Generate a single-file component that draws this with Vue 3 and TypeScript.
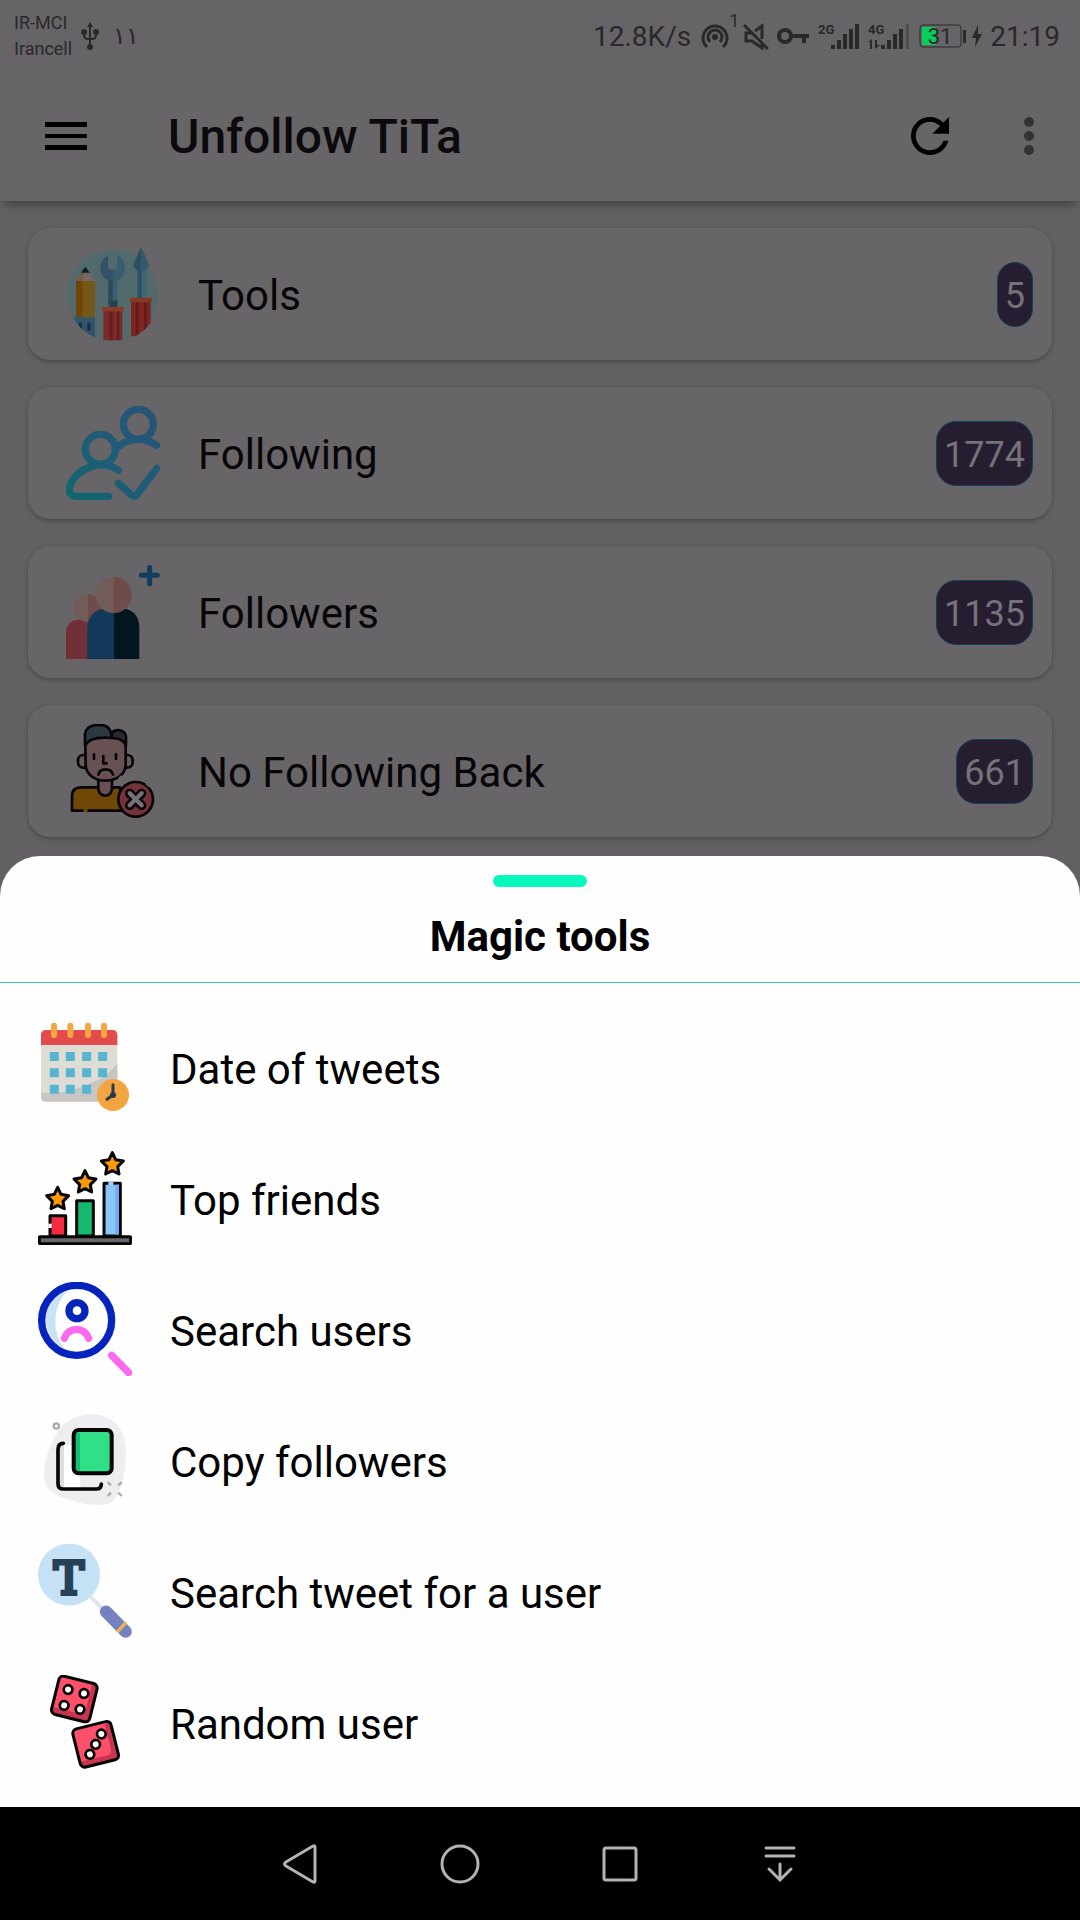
<script setup lang="ts">
interface Entry {
  label: string
  view: string
  art: string
}
interface Category extends Entry {
  count: number
}

const categories: Category[] = [
  {
    label: 'Tools',
    count: 5,
    view: '138 82 282 282',
    art: `
      <defs><clipPath id="disc"><path d="M138 70H420V225A136 137 0 0 1 141 225Z"/></clipPath></defs>
      <circle cx="278" cy="225" r="137" fill="#526a6c"/>
      <g clip-path="url(#disc)">
        <path d="M168 184H225V292H168Z" fill="#755718"/><path d="M168 184H188V292H168Z" fill="#714507"/>
        <path d="M168 184L183 158H208L225 184Z" fill="#776663"/><path d="M168 184L183 158H194L188 184Z" fill="#735b48"/>
        <path d="M183 159L196 141L209 159Z" fill="#101b25"/>
        <path d="M160 293H225V360H160Z" fill="#31546a"/>
        <path d="M181 313V325M207 314V329" stroke="#172f49" stroke-width="10" stroke-linecap="round"/>
        <path d="M265 170H292V262H265Z" fill="#3b6073"/><path d="M265 170H278V262H265Z" fill="#2d4a59"/>
        <path d="M264 108C233 117 233 171 267 183H290C323 171 323 117 292 108V143L285 150H271L264 143Z" fill="#325365"/>
        <path d="M292 108V143L285 150H278V183H290C323 171 323 117 292 108Z" fill="#395e70"/>
        <path d="M272 245L292 240V262H272Z" fill="#263f4d"/>
        <path d="M250 270H307V362H250Z" fill="#7c2a27"/><path d="M269 276H278V362H269ZM291 276H298V362H291Z" fill="#601f23"/>
        <path d="M246 262H312V275H246Z" fill="#8a3c25"/>
        <path d="M352 145H376V235H352Z" fill="#2c5162"/><path d="M365 145H376V235H365Z" fill="#3b6675"/>
        <path d="M363 82L374 105C377 118 386 127 386 140L376 153H351L340 140C342 125 350 117 353 104Z" fill="#2d4e60"/>
        <path d="M363 82L374 105C377 118 386 127 386 140L376 153H363Z" fill="#37596b"/>
        <path d="M333 243H392V350H333Z" fill="#7e251f"/><path d="M347 248H356V350H347ZM372 248H380V350H372Z" fill="#601c20"/>
        <path d="M330 234H396V247H330Z" fill="#853822"/>
      </g>`,
  },
  {
    label: 'Following',
    count: 1774,
    view: '138 558 282 282',
    art: `
      <defs><linearGradient id="sea" gradientUnits="userSpaceOnUse" x1="150" y1="830" x2="400" y2="600">
        <stop offset="0" stop-color="#10676f"/><stop offset=".5" stop-color="#1f5c78"/><stop offset="1" stop-color="#255477"/>
      </linearGradient></defs>
      <g fill="none" stroke="url(#sea)" stroke-width="22" stroke-linecap="round" stroke-linejoin="round">
        <circle cx="355" cy="613" r="45"/><circle cx="241" cy="688" r="45"/>
        <path d="M296 678C330 652 376 651 409 676M295 751C248 716 178 742 154 788C141 811 149 829 170 829H266M295 790L335 825Q344 833 352 822L410 745"/>
      </g>`,
  },
  {
    label: 'Followers',
    count: 1135,
    view: '138 75 282 282',
    art: `
      <path d="M204 162A43 43 0 1 0 204 248Z" fill="#725c59"/><path d="M204 162A43 43 0 0 1 204 248Z" fill="#6f4b4b"/>
      <path d="M138 357V280C138 253 155 236 181 240Q204 254 224 240V357Z" fill="#712f37"/>
      <path d="M202 357V265C203 235 218 213 245 207H282V357Z" fill="#12395a"/>
      <path d="M282 207H318C345 213 358 235 358 265V357H282Z" fill="#03151f"/>
      <circle cx="281" cy="165" r="54" fill="#725c59"/><path d="M281 111A54 54 0 0 1 281 219Z" fill="#6f4b4b"/>
      <path d="M389 82V131M364 106H412" stroke="#123d5d" stroke-width="15" stroke-linecap="round"/>`,
  },
  {
    label: 'No Following Back',
    count: 661,
    view: '138 552 282 282',
    art: `
      <g stroke="#080508" stroke-width="8" stroke-linecap="round" stroke-linejoin="round">
        <path d="M156 812V769Q156 742 184 742H300L310 812Z" fill="#704806"/>
        <path d="M235 721V748C240 773 270 773 276 748V721" fill="#675152"/>
        <rect x="174" y="645" width="40" height="38" rx="16" fill="#65595b"/><rect x="300" y="645" width="38" height="38" rx="16" fill="#65595b"/>
        <path d="M196 610L215 592H300L317 610V675C316 703 290 721 257 722C222 722 198 702 197 675Z" fill="#675152"/>
        <path d="M275 579C290 563 318 571 318 592V617C310 596 288 594 275 594Z" fill="#292930"/>
        <path d="M195 617V582C198 562 215 555 234 555C257 554 273 560 275 594C244 591 208 591 195 617Z" fill="#2b3a41"/>
        <path d="M222 643V657M288 643V657M250 648V670H260M235 704C240 683 273 683 279 704" fill="none"/>
        <circle cx="347" cy="778" r="52" fill="#743239"/>
      </g>
      <path d="M329 760L365 796M365 760L329 796" stroke="#080508" stroke-width="28" stroke-linecap="round"/>
      <path d="M329 760L365 796M365 760L329 796" stroke="#777078" stroke-width="13" stroke-linecap="round"/>
      <path d="M297 716L305 708M378 730L387 739" stroke="#676567" stroke-width="6"/><path d="M190 812H203" stroke="#704806" stroke-width="9"/>`,
  },
]

const magicTools: Entry[] = [
  {
    label: 'Date of tweets',
    view: '54 60 282 282',
    art: `
      <rect x="63" y="92" width="229" height="213" rx="14" fill="#dfdcd5"/>
      <path d="M63 279H110L160 269L205 253L240 238L263 222L292 190V305H77Q63 305 63 291Z" fill="#c9c5c3"/>
      <path d="M63 135V106Q63 90 79 90H277Q292 90 292 106V135Z" fill="#e34b4d"/>
      <path d="M102 77V105M151 77V105M204 77V105M252 77V105" stroke="#f1a744" stroke-width="18" stroke-linecap="round"/>
      <path d="M103 156V282M151 156V282M200 156V282M248 156V233" stroke="#56b6d1" stroke-width="27" stroke-dasharray="27 22"/>
      <circle cx="279" cy="285" r="48" fill="#f2a541"/>
      <path d="M279 254V285L261 298" fill="none" stroke="#243b50" stroke-width="9" stroke-linecap="round"/><circle cx="279" cy="285" r="9" fill="#243b50"/>`,
  },
  {
    label: 'Top friends',
    view: '54 63 282 282',
    art: `
      <defs><path id="star" d="M0 -33L10 -12L33 -8L16 9L20 31L0 21L-20 31L-16 9L-33 -8L-10 -12Z"/></defs>
      <g stroke="#050505" stroke-width="9" stroke-linejoin="round">
        <path d="M90 318V257H137V318Z" fill="#f52b3f"/><path d="M170 318V212H220V318Z" fill="#14b86f"/><path d="M252 318V160H301V318Z" fill="#8ac6fb"/>
        <g fill="#ff9807"><use href="#star" x="113" y="205"/><use href="#star" x="195" y="155"/><use href="#star" x="277" y="101"/></g>
      </g>
      <path d="M286 164H297V314H286Z" fill="#77a9f3"/><path d="M265 160H280" stroke="#a7cdfb" stroke-width="10"/><path d="M90 281V294" stroke="#fff" stroke-width="10"/>
      <rect x="58" y="320" width="274" height="21" rx="3" fill="#666568" stroke="#050505" stroke-width="9"/>`,
  },
  {
    label: 'Search users',
    view: '54 66 282 282',
    art: `
      <path d="M135 90C63 118 54 229 139 274C96 225 91 137 150 85Z" fill="#c9e2f4"/>
      <circle cx="170" cy="181" r="105" fill="none" stroke="#0524bd" stroke-width="22"/>
      <circle cx="171" cy="152" r="24" fill="none" stroke="#0524bd" stroke-width="22"/>
      <path d="M133 235C146 199 193 199 206 235M275 286L326 338" fill="none" stroke="#fb69ef" stroke-width="22" stroke-linecap="round"/>`,
  },
  {
    label: 'Copy followers',
    view: '54 69 282 282',
    art: `
      <path d="M117 120C138 90 178 70 224 73C277 79 306 110 315 159C323 214 310 300 279 333C247 356 188 342 143 328C93 313 65 290 73 239C79 191 93 155 117 120Z" fill="#eeeef1"/>
      <path d="M117 165H156V255H181V294H125L117 282Z" fill="#fff"/><path d="M117 165H132V292H117Z" fill="#dedee1"/>
      <path d="M130 160Q114 160 114 179V281Q114 297 130 297H229Q244 297 244 282" fill="none" stroke="#050505" stroke-width="11" stroke-linecap="round"/>
      <rect x="161" y="120" width="114" height="130" rx="15" fill="#31df86"/><path d="M164 130H180V247Q164 247 164 235Z" fill="#15bd75"/>
      <rect x="161" y="120" width="114" height="130" rx="15" fill="none" stroke="#050505" stroke-width="12"/>
      <circle cx="109" cy="108" r="8" fill="none" stroke="#aaa9ad" stroke-width="7"/>
      <path d="M263 276L273 286M305 276L295 286M263 318L273 308M305 318L295 308" stroke="#aaa9ad" stroke-width="7"/>`,
  },
  {
    label: 'Search tweet for a user',
    view: '54 72 282 282',
    art: `
      <path d="M211 229L250 269" stroke="#e4e5e9" stroke-width="12"/>
      <circle cx="147" cy="164" r="93" fill="#c4e1f5"/>
      <text x="147" y="221" text-anchor="middle" font-family="DejaVu Serif, serif" font-size="134" fill="#264058" stroke="#264058" stroke-width="12">T</text>
      <path d="M258 275L317 335" stroke="#7483bf" stroke-width="37" stroke-linecap="round"/>
      <path d="M291 336L319 308" stroke="#f0b64e" stroke-width="10" transform="rotate(-3 305 322)"/>`,
  },
  {
    label: 'Random user',
    view: '54 465 282 282',
    art: `
      <g transform="rotate(14 163 537)">
        <rect x="104" y="478" width="118" height="118" rx="14" fill="#ff506b"/>
        <path d="M106 576H190Q204 576 204 562V482H222V596H106Z" fill="#c83550"/>
        <rect x="104" y="478" width="118" height="118" rx="14" fill="none" stroke="#050505" stroke-width="9"/>
        <g fill="#fff" stroke="#050505" stroke-width="8"><circle cx="138" cy="514" r="13"/><circle cx="187" cy="514" r="13"/><circle cx="138" cy="563" r="13"/><circle cx="187" cy="563" r="13"/></g>
      </g>
      <g transform="rotate(-14 227 673)">
        <rect x="168" y="614" width="118" height="118" rx="14" fill="#ff506b"/>
        <path d="M170 713H253Q268 713 268 698V620H286V732H170Z" fill="#c83550"/>
        <rect x="168" y="614" width="118" height="118" rx="14" fill="none" stroke="#050505" stroke-width="9"/>
        <g fill="#fff" stroke="#050505" stroke-width="8"><circle cx="251" cy="647" r="13"/><circle cx="227" cy="673" r="13"/><circle cx="203" cy="698" r="13"/></g>
      </g>`,
  },
]
</script>

<template>
  <div class="phone">
    <div class="stage">
      <div class="backdrop">
        <div class="status">
          <div class="carriers"><span>IR-MCI</span><span>Irancell</span></div>
          <svg class="usb" width="18" height="28" viewBox="0 0 18 28" fill="none" stroke="#2a282b" stroke-width="2">
            <path d="M9 5V24M3 11V13Q3 17 7 17H11Q15 17 15 13V11" /><path d="M9 0L12 5H6Z" fill="#2a282b" stroke="none" />
            <g fill="#2a282b" stroke="none"><circle cx="9" cy="25" r="3" /><circle cx="3" cy="10" r="3" /><circle cx="15" cy="10" r="3" /></g>
          </svg>
          <span class="alerts">١١</span>
          <span class="clock speed">12.8K/s</span>
          <svg width="28" height="28" viewBox="0 0 28 28" fill="none" stroke="#2a282b" stroke-width="3">
            <path d="M6 25A12 12 0 1 1 22 25M9 20A7 7 0 1 1 19 20" /><circle cx="14" cy="15" r="3" fill="#2a282b" stroke="none" />
          </svg>
          <span class="sup">1</span>
          <svg class="mute" width="26" height="28" viewBox="0 0 26 28" fill="none" stroke="#2a282b" stroke-width="3">
            <path d="M1 3L25 27M12 9L19 4V17M9 11H3V19H9L19 26V22" />
          </svg>
          <svg class="key" width="32" height="28" viewBox="0 0 32 28" fill="none" stroke="#2a282b" stroke-width="4">
            <circle cx="8" cy="14" r="6" /><path d="M14 14H32M27 14V21" />
          </svg>
          <svg class="signal" width="41" height="28" viewBox="0 0 41 28" fill="#2a282b">
            <text x="0" y="12" class="net">2G</text>
            <path d="M13 23h4v4h-4zM19 18h4v9h-4zM25 12h4v15h-4zM31 7h4v20h-4zM37 2h4v25h-4z" />
          </svg>
          <svg class="signal" width="41" height="28" viewBox="0 0 41 28" fill="#2a282b">
            <text x="0" y="12" class="net">4G</text>
            <path d="M0 20L4 17V27H2V20ZM7 18h2v5h3l-5 4z" />
            <path d="M13 23h4v4h-4zM19 18h4v9h-4zM25 12h4v15h-4zM31 7h4v20h-4z" /><path d="M38 2h3v25h-3z" fill="#504e51" />
          </svg>
          <svg class="battery" width="48" height="28" viewBox="0 0 48 28" fill="#2a282b">
            <rect x="1" y="3" width="41" height="22" rx="3" fill="none" stroke="#2a282b" />
            <path d="M3 5h14v18H3z" fill="#05d05c" /><path d="M44 8h3v13h-3z" />
            <text x="21" y="22" text-anchor="middle" class="level">31</text>
          </svg>
          <svg class="bolt" width="10" height="28" viewBox="0 0 10 28"><path d="M6 3L0 16H4L3 25L10 12H6Z" fill="#2a282b" /></svg>
          <span class="clock">21:19</span>
        </div>

        <header class="bar">
          <button class="plain" aria-label="Open menu">
            <svg width="42" height="28" viewBox="0 0 42 28"><path d="M0 0h42v5H0zM0 12h42v4H0zM0 23h42v5H0z" /></svg>
          </button>
          <h1>Unfollow TiTa</h1>
          <button class="plain refresh" aria-label="Refresh">
            <svg width="38" height="38" viewBox="4 4 16 16"><path d="M17.65 6.35A7.96 7.96 0 0 0 12 4a8 8 0 1 0 7.73 10h-2.08A6 6 0 1 1 12 6c1.66 0 3.14.69 4.22 1.78L13 11h7V4z" /></svg>
          </button>
          <button class="plain" aria-label="More options">
            <svg width="10" height="38" viewBox="0 0 10 38" fill="#343235"><circle cx="5" cy="5" r="5" /><circle cx="5" cy="19" r="5" /><circle cx="5" cy="33" r="5" /></svg>
          </button>
        </header>

        <main class="cards">
          <button v-for="c in categories" :key="c.label" class="card">
            <svg class="art" :viewBox="c.view" v-html="c.art"></svg>
            <span class="label">{{ c.label }}</span>
            <span class="badge">{{ c.count }}</span>
          </button>
        </main>
      </div>

      <section class="sheet" aria-labelledby="sheet-title">
        <div class="handle"></div>
        <h2 id="sheet-title">Magic tools</h2>
        <ul>
          <li v-for="t in magicTools" :key="t.label">
            <button class="tool">
              <svg class="art" :viewBox="t.view" v-html="t.art"></svg>
              <span class="label">{{ t.label }}</span>
            </button>
          </li>
        </ul>
      </section>
    </div>

    <nav class="keys">
      <button aria-label="Back"><svg width="40" height="40" viewBox="0 0 40 40"><path d="M35 3V37Q35 39 33 38L6 22Q3 20 6 18L33 2Q35 1 35 3Z" /></svg></button>
      <button aria-label="Home"><svg width="40" height="40" viewBox="0 0 40 40"><circle cx="20" cy="20" r="18" /></svg></button>
      <button aria-label="Recent apps"><svg width="40" height="40" viewBox="0 0 40 40"><rect x="4" y="4" width="32" height="32" rx="2" /></svg></button>
      <button aria-label="Pull down notifications"><svg width="40" height="40" viewBox="0 0 40 40"><path d="M6 4H34M6 12H34M20 20V36M9 25L20 36L31 25" stroke-linecap="round" /></svg></button>
    </nav>
  </div>
</template>

<style>
body {
  margin: 0;
  background: #000;
}
</style>

<style scoped>
.phone {
  min-height: 100vh;
  display: flex;
  flex-direction: column;
  font-family: Roboto, 'DejaVu Sans', sans-serif;
  color: #000;
}
button {
  border: 0;
  padding: 0;
  background: none;
  color: inherit;
  font: inherit;
  text-align: left;
}
svg {
  display: block;
  flex: none;
}
.stage {
  flex: 1;
  display: grid;
  background: #636063;
}
.backdrop,
.sheet {
  grid-area: 1 / 1;
}
.status {
  box-sizing: border-box;
  display: flex;
  align-items: center;
  height: 70px;
  padding: 2px 20px 0 14px;
  color: #2a282b;
}
.backdrop {
  background: linear-gradient(#666466 70px, transparent 70px);
}
.carriers {
  display: flex;
  flex-direction: column;
  font-size: 18px;
  line-height: 26px;
}
.usb {
  margin-left: 9px;
}
.alerts {
  margin-left: 14px;
  font-size: 24px;
}
.clock {
  font-size: 28px;
}
.speed {
  margin: 0 10px 0 auto;
}
.sup {
  align-self: flex-start;
  margin-top: 8px;
  font-size: 18px;
}
.mute {
  margin-left: 4px;
}
.key {
  margin-left: 8px;
}
.signal {
  margin-left: 9px;
}
.net {
  font-size: 13px;
  font-weight: 700;
}
.battery {
  margin-left: 10px;
}
.level {
  font-size: 22px;
}
.bolt {
  margin: 0 8px 0 5px;
}
.bar {
  display: flex;
  align-items: center;
  height: 131px;
  padding: 0 46px 0 45px;
  background: #676567;
  box-shadow: 0 8px 8px -4px #454346;
}
h1 {
  flex: 1;
  margin: 0 0 0 81px;
  padding-top: 2px;
  font-size: 48px;
  font-weight: 500;
  line-height: 56px;
  color: #0c0a0d;
}
.refresh {
  margin-right: 75px;
}
.cards {
  display: flex;
  flex-direction: column;
  gap: 27px;
  padding: 27px 28px;
}
.card {
  display: flex;
  align-items: center;
  height: 132px;
  padding: 0 19px 0 38px;
  border-radius: 22px;
  background: #676567;
  box-shadow: 0 2px 4px #4c4a4d, 0 0 2px #585659;
}
.art {
  width: 94px;
  height: 94px;
}
.label {
  flex: 1;
  margin-left: 38px;
  padding-top: 4px;
  font-size: 42px;
  line-height: 50px;
}
.card .label {
  color: #070508;
}
.tool .label {
  padding-top: 6px;
}
.badge {
  box-sizing: border-box;
  height: 65px;
  padding: 0 7px;
  border: 1px solid #12415c;
  border-radius: 20px;
  background: #271d31;
  color: #777279;
  font-size: 36px;
  line-height: 66px;
}
.sheet {
  align-self: end;
  display: flex;
  flex-direction: column;
  padding-top: 19px;
  border-radius: 40px 40px 0 0;
  background: #fefefe;
}
.handle {
  align-self: center;
  width: 94px;
  height: 12px;
  border-radius: 6px;
  background: #06f8bd;
}
h2 {
  margin: 26px 0 21px;
  font-size: 42px;
  font-weight: 700;
  line-height: 48px;
  text-align: center;
}
ul {
  margin: 0;
  padding: 18px 0 20px;
  border-top: 1px solid #35c8a8;
  list-style: none;
}
.tool {
  display: flex;
  align-items: center;
  width: 100%;
  height: 131px;
  padding: 0 38px;
}
.keys {
  display: flex;
  justify-content: center;
  height: 113px;
  background: #000;
}
.keys button {
  display: flex;
  align-items: center;
  justify-content: center;
  width: 160px;
}
.keys svg {
  fill: none;
  stroke: #b5b1b5;
  stroke-width: 3;
}
</style>
